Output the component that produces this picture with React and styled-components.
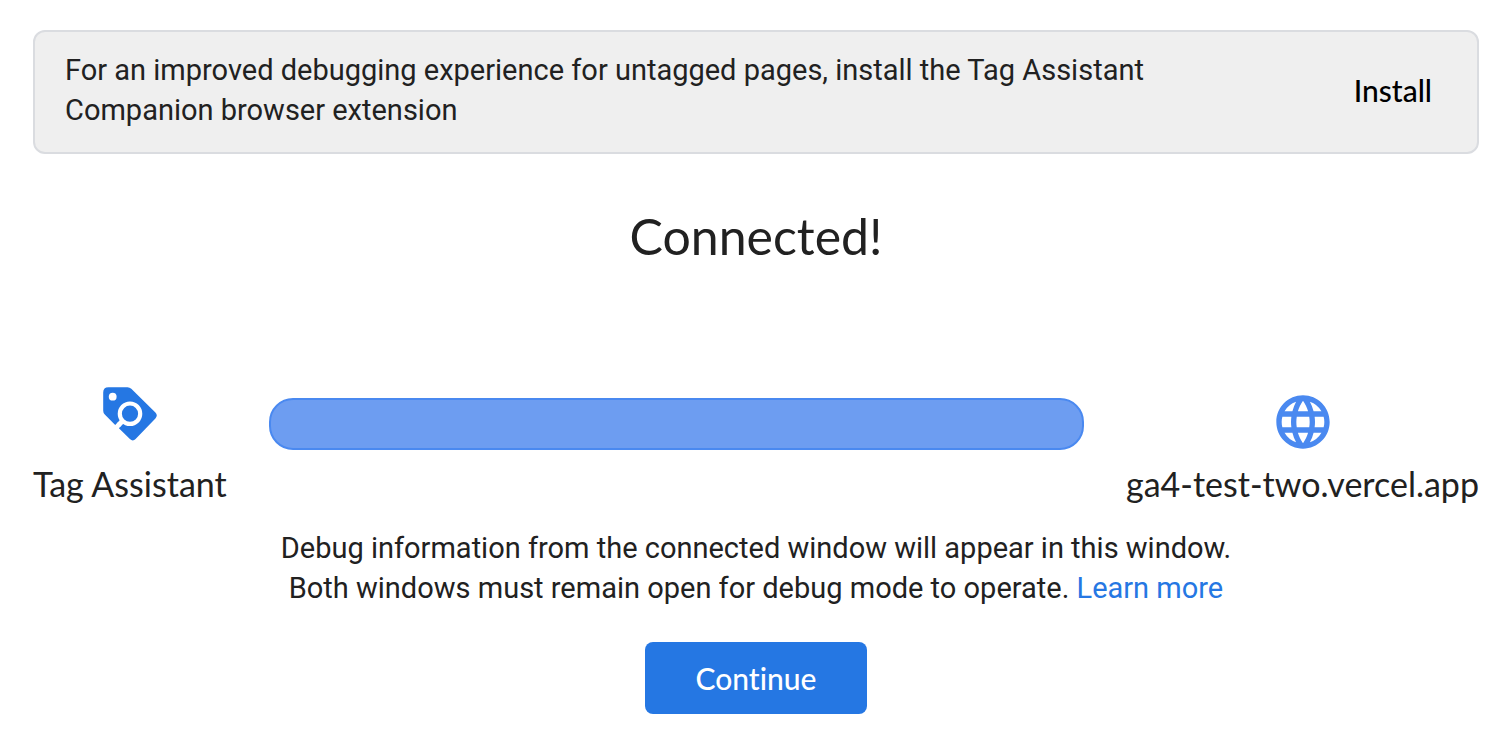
import React from "react";
import styled, { createGlobalStyle } from "styled-components";
import { MdLanguage } from "react-icons/md";

const display = '"Google Sans", Lato, "Open Sans", sans-serif';

const GlobalStyle = createGlobalStyle`
  * { box-sizing: border-box; }
  body {
    margin: 0;
    background: #fff;
    color: #212121;
    font-family: Roboto, sans-serif;
    font-size: 29px;
    line-height: 40px;
    font-variant-ligatures: none;
  }
`;

const Page = styled.main`
  display: flex;
  flex-direction: column;
  padding: 30px 27px 28px 33px;
`;

const Notice = styled.section`
  display: flex;
  align-items: center;
  justify-content: space-between;
  padding: 18px 30px 22px;
  border: 2px solid #dadce0;
  border-radius: 12px;
  background: #efefef;
`;

const NoticeText = styled.p`
  margin: 0;
  max-width: 1120px;
`;

const InstallButton = styled.button`
  padding: 0 15px;
  border: 0;
  background: transparent;
  color: #000;
  font: 500 30px/40px ${display};
  cursor: pointer;
`;

const Title = styled.h1`
  margin: 56px 0 0;
  font: 400 50px/52px ${display};
  text-align: center;
`;

const Connection = styled.div`
  display: grid;
  grid-template-columns: auto 1fr auto;
  column-gap: 42px;
  margin-top: 120px;
`;

const Endpoint = styled.div`
  display: flex;
  flex-direction: column;
  align-items: center;
  justify-content: flex-end;
  gap: 10px;
`;

const EndpointName = styled.span`
  font: 400 34px/40px ${display};
`;

const Globe = styled(MdLanguage)`
  display: block;
  color: #4a89f0;
`;

const Link = styled.div`
  height: 52px;
  margin-top: 16px;
  border: 2px solid #4a89f0;
  border-radius: 24px;
  background: #6d9df1;
`;

const Details = styled.p`
  margin: 24px 0 0;
  text-align: center;
`;

const Anchor = styled.a`
  color: #2577e3;
  text-decoration: none;
`;

const ContinueButton = styled.button`
  align-self: center;
  height: 72px;
  margin-top: 34px;
  padding: 0 51px;
  border: 0;
  border-radius: 8px;
  background: #2577e3;
  color: #fff;
  font: 500 30px/40px ${display};
  font-variant-ligatures: none;
  cursor: pointer;
`;

function TagIcon() {
  return (
    <svg width="64" height="72" viewBox="0 0 64 72" aria-hidden="true">
      <g transform="translate(5 5)">
        <path
          fill="#2577e3"
          d="M5.5.2H24.5Q26.7.2 28.3 1.8L52.4 25.6Q55.2 28.5 52.4 31.4L32.6 52.1Q29.8 55 26.9 52.1L15.9 41.2L18 39L14.6 35.6L12.2 38L1.8 27.6Q.2 26 .2 23.8V5.5Q.2.2 5.5.2Z"
        />
        <circle cx="9.7" cy="9.7" r="3.9" fill="#fff" />
        <path d="M20 33.6L15.6 38" stroke="#fff" strokeWidth="5" />
        <circle cx="27" cy="26.7" r="10.2" fill="none" stroke="#fff" strokeWidth="4.2" />
      </g>
    </svg>
  );
}

export default function App() {
  return (
    <>
      <GlobalStyle />
      <Page>
        <Notice>
          <NoticeText>
            For an improved debugging experience for untagged pages, install the Tag Assistant
            Companion browser extension
          </NoticeText>
          <InstallButton type="button">Install</InstallButton>
        </Notice>
        <Title>Connected!</Title>
        <Connection>
          <Endpoint>
            <TagIcon />
            <EndpointName>Tag Assistant</EndpointName>
          </Endpoint>
          <Link />
          <Endpoint>
            <Globe size={64} aria-hidden="true" />
            <EndpointName>ga4-test-two.vercel.app</EndpointName>
          </Endpoint>
        </Connection>
        <Details>
          Debug information from the connected window will appear in this window.
          <br />
          Both windows must remain open for debug mode to operate.{" "}
          <Anchor href="#learn-more">Learn more</Anchor>
        </Details>
        <ContinueButton type="button">Continue</ContinueButton>
      </Page>
    </>
  );
}
